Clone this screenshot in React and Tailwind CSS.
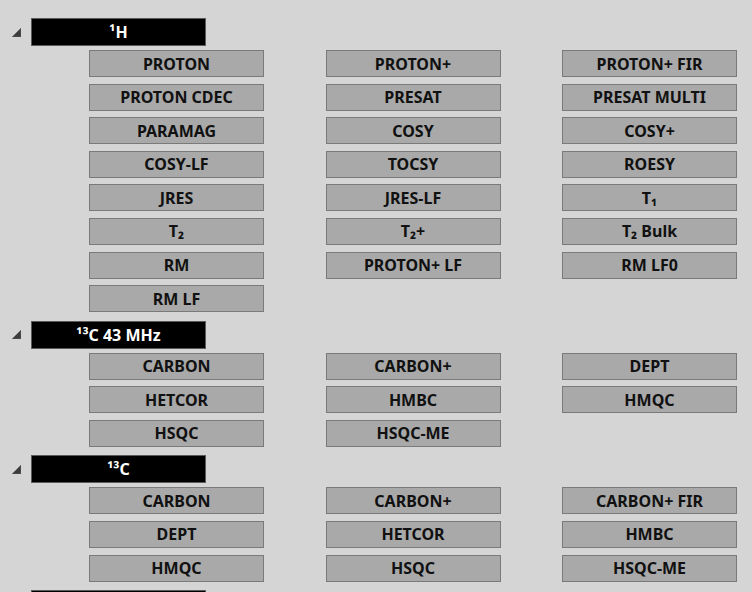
import React from 'react';

const sections = [
  {
    title: '¹H',
    items: [
      'PROTON', 'PROTON+', 'PROTON+ FIR',
      'PROTON CDEC', 'PRESAT', 'PRESAT MULTI',
      'PARAMAG', 'COSY', 'COSY+',
      'COSY-LF', 'TOCSY', 'ROESY',
      'JRES', 'JRES-LF', 'T₁',
      'T₂', 'T₂+', 'T₂ Bulk',
      'RM', 'PROTON+ LF', 'RM LF0',
      'RM LF'
    ]
  },
  {
    title: '¹³C 43 MHz',
    items: [
      'CARBON', 'CARBON+', 'DEPT',
      'HETCOR', 'HMBC', 'HMQC',
      'HSQC', 'HSQC-ME'
    ]
  },
  {
    title: '¹³C',
    items: [
      'CARBON', 'CARBON+', 'CARBON+ FIR',
      'DEPT', 'HETCOR', 'HMBC',
      'HMQC', 'HSQC', 'HSQC-ME'
    ]
  },
  // next group only peeks in at the bottom edge
  { title: '', items: [] }
];

const Arrow = () => (
  <svg width="9" height="9" viewBox="0 0 9 9" className="shrink-0">
    <path d="M9 0 L9 9 L0 9 Z" fill="#3c3c3c" stroke="#6a6a6a" strokeWidth="0.6" />
  </svg>
);

const Section = ({ title, items }) => (
  <div className="mb-[8.5px]">
    <div className="flex items-center pl-[12px] h-[28px]">
      <Arrow />
      <div className="ml-[10px] w-[175px] h-full bg-black border border-[#5a5a5a] text-white font-bold text-[16px] flex items-center justify-center leading-none">
        {title}
      </div>
    </div>
    {items.length > 0 && (
      <div className="mt-[4px] pl-[89px] grid grid-cols-[175px_175px_175px] gap-x-[61.5px] gap-y-[6.6px]">
        {items.map((item, i) => (
          <button
            key={i}
            className="h-[27px] bg-[#a9a9a9] border border-[#7a7a7a] text-[#111] font-bold text-[16px] flex items-center justify-center leading-none"
          >
            {item}
          </button>
        ))}
      </div>
    )}
  </div>
);

const App = () => {
  return (
    <div
      className="w-[752px] h-[592px] overflow-hidden bg-[#d5d5d5] pt-[18px]"
      style={{ fontFamily: '"Noto Sans", "Open Sans", sans-serif' }}
    >
      {sections.map((s, i) => (
        <Section key={i} title={s.title} items={s.items} />
      ))}
    </div>
  );
};

export default App;
